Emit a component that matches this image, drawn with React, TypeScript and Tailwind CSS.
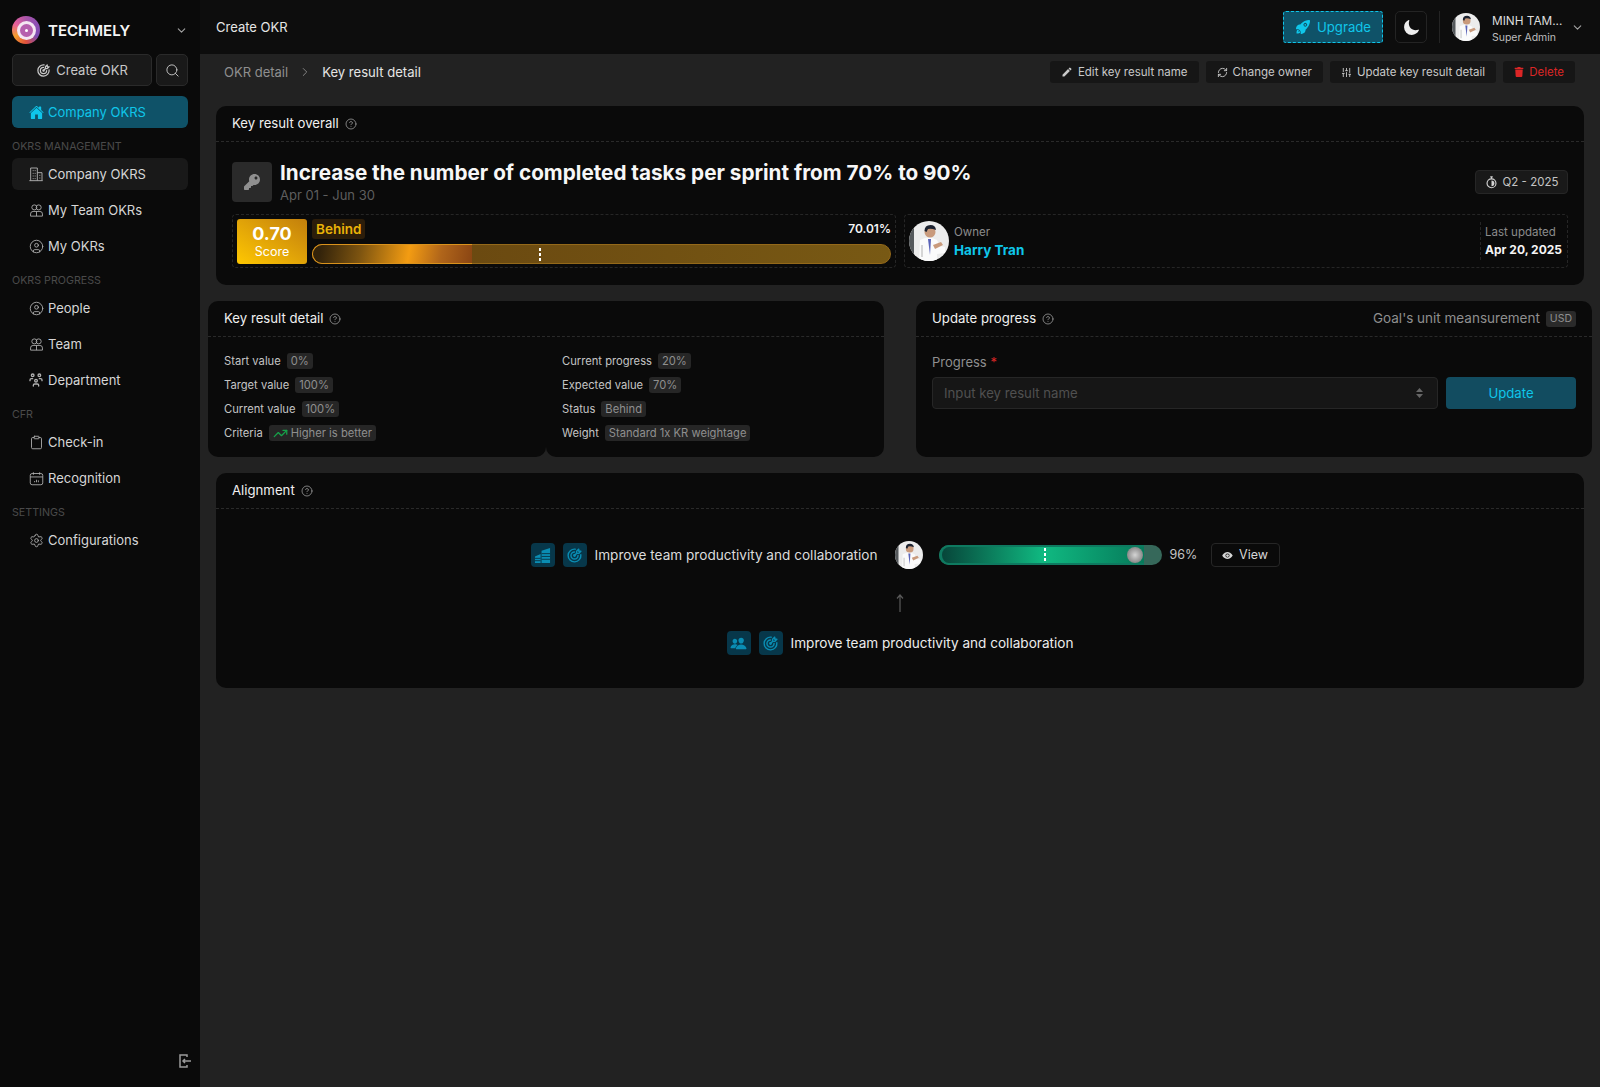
import {
  ChevronDown,
  ChevronRight,
  CircleHelp,
  CircleUser,
  Clipboard,
  RefreshCw,
  Search,
  Settings,
  SlidersVertical,
  TrendingUp,
} from "lucide-react";
import type { ReactNode } from "react";
import { FaKey, FaTrash } from "react-icons/fa";
import { IoEye, IoHome, IoMoon, IoPeople, IoRocket } from "react-icons/io5";
import { MdEdit } from "react-icons/md";
import { TbTargetArrow, TbUsersGroup } from "react-icons/tb";

function TeamIcon({ className }: { className?: string }) {
  return (
    <svg className={className} fill="none" stroke="currentColor" strokeWidth="1.4" viewBox="0 0 24 24">
      <circle cx="8.5" cy="7" r="4" />
      <circle cx="15.5" cy="7" r="4" />
      <path d="M2.5 21v-3.5a4 4 0 0 1 4-4h11a4 4 0 0 1 4 4V21z" strokeLinejoin="round" />
      <path d="M12 13.5V21" />
    </svg>
  );
}

function BuildingIcon({ className }: { className?: string }) {
  return (
    <svg className={className} fill="none" stroke="currentColor" strokeWidth="1.4" viewBox="0 0 24 24">
      <path d="M2 22h20M4 22V3h10v19M14 10h7v12" />
      <path d="M7 7h1.500M10 7h1.500M7 11h1.500M10 11h1.500M7 15h1.500M10 15h1.500M7 19h1.500M10 19h1.500M17 14h1.500M17 18h1.500" />
    </svg>
  );
}

function CalendarIcon({ className }: { className?: string }) {
  return (
    <svg className={className} fill="none" stroke="currentColor" strokeWidth="1.4" viewBox="0 0 24 24">
      <rect height="18" rx="3" width="20" x="2" y="4" />
      <path d="M2 9.500h20M7 2v4M17 2v4" />
      <path d="M9 18v-2M12 18v-4M15 18v-3" />
    </svg>
  );
}

function Avatar({ className }: { className?: string }) {
  return (
    <svg className={className} viewBox="0 0 40 40">
      <defs>
        <clipPath id="avatar-clip">
          <circle cx="20" cy="20" r="20" />
        </clipPath>
      </defs>
      <g clipPath="url(#avatar-clip)">
        <rect fill="#ececec" height="40" width="40" />
        <rect fill="#55595c" height="40" width="5" />
        <path d="M10 40 11 19q9-5 17 0l3 6 5 1v6l-8 1v7z" fill="#fbfbfb" />
        <path d="M19 18h3l-1 16z" fill="#5a63b8" />
        <circle cx="21" cy="11" fill="#c99a7c" r="5.500" />
        <path d="M15.500 10q0-6 6-6 5 0 5.500 5-5-2-8-1l-1.500 3z" fill="#1c2230" />
        <path d="M24 24l8-3 2 3-8 4z" fill="#c99a7c" />
        <path d="M12 24h2v12h-2z" fill="#d6d6d6" />
      </g>
    </svg>
  );
}

function HelpIcon() {
  return <CircleHelp className="size-[12px] text-[#a3a3a3]" strokeWidth={1.5} />;
}

function Card({ title, right, children }: { title: string; right?: ReactNode; children: ReactNode }) {
  return (
    <section className="rounded-[10px] bg-[#0a0a0a]">
      <CardHeader title={title} right={right} />
      {children}
    </section>
  );
}

function CardHeader({ title, right }: { title: string; right?: ReactNode }) {
  return (
    <div className="flex h-[36px] items-center gap-[6px] border-b border-dashed border-[#2a2a2a] px-4 text-[13.2px] text-[#f0f0f0]">
      <span>{title}</span>
      <HelpIcon />
      {right}
    </div>
  );
}

function NavItem({ icon, label, active }: { icon: ReactNode; label: string; active?: boolean }) {
  return (
    <div
      className={`flex h-[32px] items-center gap-[3px] rounded-md pl-[15px] text-[13px] text-[#d6d6d6] ${
        active ? "bg-[#191919]" : ""
      }`}
    >
      <span className="flex size-[18px] items-center justify-center text-[#b0b0b0]">{icon}</span>
      <span className="pt-px">{label}</span>
    </div>
  );
}

function NavLabel({ children }: { children: ReactNode }) {
  return <div className="flex h-[30px] pt-[10px] text-[10.7px] leading-[18px] text-[#4a4a4a]">{children}</div>;
}

function Sidebar() {
  const iconClass = "size-[15px]";
  return (
    <aside className="flex w-[200px] shrink-0 flex-col bg-[#0a0a0a] px-3 pt-4">
      <div className="flex h-[28px] items-center">
        <div className="flex size-[28px] items-center justify-center rounded-full bg-[conic-gradient(#a855a8,#8e4fb4,#7c4bb0,#e0503c,#f59e2e,#e8609c,#a855a8)]">
          <div className="flex size-[19px] items-center justify-center rounded-full bg-[#f4e6f2]">
            <div className="flex size-[13px] items-center justify-center rounded-full bg-[#b65fae]">
              <div className="size-[3px] rounded-full bg-white" />
            </div>
          </div>
        </div>
        <span className="ml-2 pt-[2px] text-[15px] font-semibold text-[#f5f5f5]">TECHMELY</span>
        <ChevronDown className="ml-auto size-[13px] text-[#a3a3a3]" />
      </div>

      <div className="mt-[10px] flex gap-1">
        <div className="flex h-[32px] w-[140px] items-center justify-center gap-[5px] rounded-[5px] border border-[#2a2a2a] bg-[#191919] text-[13px] text-[#c8c8c8]">
          <TbTargetArrow className="size-[15px]" />
          <span className="pt-px">Create OKR</span>
        </div>
        <div className="flex h-[32px] w-[32px] items-center justify-center rounded-[5px] border border-[#2a2a2a] bg-[#191919] text-[#c8c8c8]">
          <Search className="size-[15px]" strokeWidth={1.5} />
        </div>
      </div>

      <div className="mt-[10px] flex h-[32px] items-center gap-[3px] rounded-md bg-[#0f5268] pl-[15px] text-[13px] text-[#0fc6ea]">
        <span className="flex size-[18px] items-center justify-center">
          <IoHome className="size-[15px]" />
        </span>
        <span className="pt-px">Company OKRS</span>
      </div>

      <NavLabel>OKRS MANAGEMENT</NavLabel>
      <div className="flex flex-col gap-1">
        <NavItem active icon={<BuildingIcon className="size-[16px]" />} label="Company OKRS" />
        <NavItem icon={<TeamIcon className={iconClass} />} label="My Team OKRs" />
        <NavItem icon={<CircleUser className={iconClass} strokeWidth={1.4} />} label="My OKRs" />
      </div>

      <NavLabel>OKRS PROGRESS</NavLabel>
      <div className="flex flex-col gap-1">
        <NavItem icon={<CircleUser className={iconClass} strokeWidth={1.4} />} label="People" />
        <NavItem icon={<TeamIcon className={iconClass} />} label="Team" />
        <NavItem icon={<TbUsersGroup className="size-[16px]" />} label="Department" />
      </div>

      <NavLabel>CFR</NavLabel>
      <div className="flex flex-col gap-1">
        <NavItem icon={<Clipboard className={iconClass} strokeWidth={1.4} />} label="Check-in" />
        <NavItem icon={<CalendarIcon className="size-[15px]" />} label="Recognition" />
      </div>

      <NavLabel>SETTINGS</NavLabel>
      <NavItem icon={<Settings className={iconClass} strokeWidth={1.4} />} label="Configurations" />

      <div className="-mr-1 mb-[18px] mt-auto flex justify-end text-[#9a9a9a]">
        <svg className="size-[16px]" fill="none" stroke="currentColor" strokeWidth="1.500" viewBox="0 0 16 16">
          <path d="M11 4V2H4v12h7v-2" />
          <path d="M15 8H7M9 6 7 8l2 2" />
        </svg>
      </div>
    </aside>
  );
}

function TopBar() {
  return (
    <header className="flex h-[54px] items-center bg-[#0d0d0d] pl-4 pr-4">
      <span className="pt-px text-[13px] text-[#e5e5e5]">Create OKR</span>
      <div className="ml-auto flex h-[32px] w-[100px] items-center justify-center gap-[6px] rounded-[3px] border border-dashed border-[#0fc6ea] bg-[#0f5268] text-[13.2px] text-[#0fc6ea]">
        <IoRocket className="size-[16px]" />
        <span className="pt-px">Upgrade</span>
      </div>
      <div className="ml-3 flex h-[32px] w-[32px] items-center justify-center rounded-[5px] border border-[#242424] text-[#eeeeee]">
        <IoMoon className="size-[17px]" />
      </div>
      <div className="ml-3 h-[32px] w-px bg-[#242424]" />
      <Avatar className="ml-3 size-[28px]" />
      <div className="ml-3 w-[68px] whitespace-nowrap pt-[5px] leading-none">
        <div className="text-[11.8px] text-[#dddddd]">MINH TAM...</div>
        <div className="mt-[5px] text-[10.5px] text-[#bdbdbd]">Super Admin</div>
      </div>
      <ChevronDown className="ml-[11px] size-[13px] text-[#a3a3a3]" />
    </header>
  );
}

function ActionButton({ icon, label, danger }: { icon: ReactNode; label: string; danger?: boolean }) {
  return (
    <div
      className={`flex h-[22px] items-center gap-[5px] rounded-[3px] bg-[#161616] px-[11px] text-[11.5px] ${
        danger ? "text-[#dc2626]" : "text-[#c8c8c8]"
      }`}
    >
      {icon}
      <span className="pt-[2px]">{label}</span>
    </div>
  );
}

function Tag({ children }: { children: ReactNode }) {
  return (
    <span className="flex h-[16px] items-center gap-[3px] rounded-[3px] bg-[#262626] px-1 text-[11.2px] text-[#8f8f8f]">
      {children}
    </span>
  );
}

function DetailRow({ label, children }: { label: string; children: ReactNode }) {
  return (
    <div className="flex h-[24px] items-center gap-[6px] text-[11.2px] text-[#c4c4c4]">
      <span>{label}</span>
      <Tag>{children}</Tag>
    </div>
  );
}

function StopwatchIcon() {
  return (
    <svg className="size-[13px] text-[#d4d4d4]" fill="none" stroke="currentColor" strokeWidth="1.4" viewBox="0 0 16 16">
      <path d="M6.500 1h3M8 1v2.500" />
      <circle cx="8" cy="9" r="5.500" />
      <path d="M8 5.500a3.500 3.500 0 0 1 0 7z" fill="currentColor" stroke="none" />
    </svg>
  );
}

function ScoreRow() {
  return (
    <div className="mt-3 grid grid-cols-2 gap-2">
      <div className="flex h-[54px] gap-[5px] rounded-[4px] border border-dashed border-[#262626] px-1 pt-1">
        <div className="flex h-[45px] w-[70px] shrink-0 flex-col items-center justify-center rounded-[3px] bg-gradient-to-tr from-[#ffc800] to-[#c27f0c] text-white">
          <span className="text-[18px] font-bold leading-[20px]">0.70</span>
          <span className="text-[12.5px] leading-[15px]">Score</span>
        </div>
        <div className="flex-1">
          <div className="flex h-[20px] items-center justify-between">
            <span className="rounded-[3px] bg-[#2c1d0a] px-1 text-[13.5px] font-semibold leading-[20px] text-[#eab308]">
              Behind
            </span>
            <span className="text-[12px] font-semibold text-[#f5f5f5]">70.01%</span>
          </div>
          <div className="relative mt-[5px] h-[20px] rounded-full border border-[#94691a] bg-gradient-to-r from-[#66440f] to-[#785914]">
            <div className="absolute -inset-y-px -left-px w-[160px] rounded-l-full border-y-[1.5px] border-l-[1.5px] border-[#d9921c] bg-[linear-gradient(100deg,#33230a_5%,#7d5410_30%,#f39c12_60%,#b0651a_80%,#8a4513)]" />
            <div className="absolute left-[226px] top-[3px] h-[13px] w-[2px] bg-[repeating-linear-gradient(#ffffff_0_3px,transparent_3px_5px)]" />
          </div>
        </div>
      </div>
      <div className="flex h-[54px] items-center rounded-[4px] border border-dashed border-[#262626] pl-[4px] pr-[5px]">
        <Avatar className="size-[40px]" />
        <div className="ml-[5px]">
          <div className="text-[11.5px] leading-[17px] text-[#8c8c8c]">Owner</div>
          <div className="text-[13.5px] font-bold leading-[18px] text-[#0fc6ea]">Harry Tran</div>
        </div>
        <div className="ml-auto h-[38px] border-l border-dashed border-[#262626] pl-[4px]">
          <div className="pt-px text-[11.5px] leading-[18px] text-[#8c8c8c]">Last updated</div>
          <div className="text-[12px] font-bold leading-[18px] text-[#f5f5f5]">Apr 20, 2025</div>
        </div>
      </div>
    </div>
  );
}

function OverallCard() {
  return (
    <Card title="Key result overall">
      <div className="px-4 pb-[17px] pt-5">
        <div className="flex h-[40px] gap-2">
          <div className="flex size-[40px] items-center justify-center rounded-[4px] bg-[#2a2a2a] text-[#8f8f8f]">
            <FaKey className="size-[16px]" />
          </div>
          <div>
            <h1 className="text-[20.7px] font-bold leading-[21px] text-[#f7f7f7]">
              Increase the number of completed tasks per sprint from 70% to 90%
            </h1>
            <div className="text-[13px] leading-[24px] text-[#5e5e5e]">Apr 01 - Jun 30</div>
          </div>
          <div className="ml-auto mt-2 flex h-[24px] w-[93px] items-center justify-center gap-[5px] rounded-[4px] border border-[#262626] bg-[#191919] text-[11.5px] text-[#c4c4c4]">
            <StopwatchIcon />
            <span className="pt-px">Q2 - 2025</span>
          </div>
        </div>
        <ScoreRow />
      </div>
    </Card>
  );
}

function DetailCard() {
  return (
    <section>
      <div className="rounded-t-[10px] bg-[#0a0a0a]">
        <CardHeader title="Key result detail" />
      </div>
      <div className="grid h-[120px] grid-cols-2">
        <div className="rounded-b-[10px] bg-[#0a0a0a] pl-4 pt-[12px]">
          <DetailRow label="Start value">0%</DetailRow>
          <DetailRow label="Target value">100%</DetailRow>
          <DetailRow label="Current value">100%</DetailRow>
          <DetailRow label="Criteria">
            <TrendingUp className="size-[15px] text-[#16a34a]" strokeWidth={2} />
            Higher is better
          </DetailRow>
        </div>
        <div className="rounded-b-[10px] bg-[#0a0a0a] pl-4 pt-[12px]">
          <DetailRow label="Current progress">20%</DetailRow>
          <DetailRow label="Expected value">70%</DetailRow>
          <DetailRow label="Status">Behind</DetailRow>
          <DetailRow label="Weight">Standard 1x KR weightage</DetailRow>
        </div>
      </div>
    </section>
  );
}

function UpdateCard() {
  return (
    <Card
      title="Update progress"
      right={
        <div className="ml-auto flex items-center gap-[6px] text-[13.5px] text-[#8f8f8f]">
          Goal's unit meansurement
          <span className="flex h-[16px] items-center rounded-[3px] bg-[#2a2a2a] px-[4px] text-[10.5px]">USD</span>
        </div>
      }
    >
      <div className="h-[120px] px-4 pt-[15px]">
        <div className="text-[13px] leading-[20px] text-[#8f8f8f]">
          Progress <span className="text-[#dc2626]">*</span>
        </div>
        <div className="mt-[5px] flex gap-2">
          <div className="flex h-[32px] flex-1 items-center justify-between rounded-[4px] border border-[#262626] bg-[#161616] pl-[11px] pr-[14px] text-[13.2px] text-[#505050]">
            <span className="pt-px">Input key result name</span>
            <svg className="h-[10px] w-[7px] text-[#666666]" fill="currentColor" viewBox="0 0 7 10">
              <path d="M3.500 0 7 4H0zM3.500 10 0 6h7z" />
            </svg>
          </div>
          <div className="flex h-[32px] w-[130px] items-center justify-center rounded-[4px] bg-[#124c60] pt-px text-[13.2px] text-[#0fc6ea]">
            Update
          </div>
        </div>
      </div>
    </Card>
  );
}

function IconTile({ children }: { children: ReactNode }) {
  return (
    <div className="flex size-[24px] items-center justify-center rounded-[4px] bg-[#07374a] text-[#0a8db3]">
      {children}
    </div>
  );
}

function AlignmentCard() {
  return (
    <Card title="Alignment">
      <div className="flex h-[179px] flex-col items-center pt-[32px] text-[13.6px]">
        <div className="ml-[10px] flex h-[28px] items-center">
          <IconTile>
            <svg className="size-[17px]" viewBox="0 0 18 18">
              <path d="M1 17v-7l6-2.500V17zM8 17V4l9-3v16z" fill="currentColor" />
              <path d="M1 12h6M1 14.500h6M8 7h9M8 10h9M8 13h9" stroke="#07374a" strokeWidth="1" />
            </svg>
          </IconTile>
          <div className="ml-2">
            <IconTile>
              <TbTargetArrow className="size-[17px]" />
            </IconTile>
          </div>
          <span className="ml-2 w-[284px] whitespace-nowrap text-[#dcdcdc]">
            Improve team productivity and collaboration
          </span>
          <Avatar className="ml-4 size-[28px]" />
          <div className="relative ml-4 h-[20px] w-[223px] rounded-full bg-[#36685a]">
            <div className="absolute inset-y-0 left-0 w-[205px] rounded-l-full border-y-[2px] border-l-[3px] border-[#0e7a60] bg-[linear-gradient(90deg,#07463a,#10b981_50%,#067a5a)]" />
            <div className="absolute left-[105px] top-[3px] h-[14px] w-[2px] bg-[repeating-linear-gradient(#ffffff_0_3px,transparent_3px_5px)]" />
            <div className="absolute left-[188px] top-[2px] size-[16px] rounded-full bg-[radial-gradient(circle,#d4d4d4,#8a8a8a_70%,#c4c4c4)]" />
          </div>
          <span className="ml-2 w-[41px] text-[12.5px] text-[#c4c4c4]">96%</span>
          <div className="flex h-[24px] w-[69px] items-center justify-center gap-[6px] rounded-[4px] border border-[#262626] text-[12.5px] text-[#d6d6d6]">
            <IoEye className="size-[11px]" />
            View
          </div>
        </div>
        <svg
          className="mt-[25px] h-[18px] w-[12px] text-[#5a5a5a]"
          fill="none"
          stroke="currentColor"
          strokeWidth="1.2"
          viewBox="0 0 12 18"
        >
          <path d="M6 18V1M3 4.500 6 1l3 3.500" />
        </svg>
        <div className="mt-[19px] flex h-[24px] items-center">
          <IconTile>
            <IoPeople className="size-[17px]" />
          </IconTile>
          <div className="ml-2">
            <IconTile>
              <TbTargetArrow className="size-[17px]" />
            </IconTile>
          </div>
          <span className="ml-2 text-[#ededed]">Improve team productivity and collaboration</span>
        </div>
      </div>
    </Card>
  );
}

export default function App() {
  return (
    <div className="flex min-h-[1087px] w-full bg-[#222222] font-['Inter',sans-serif]">
      <Sidebar />
      <main className="min-w-0 flex-1">
        <TopBar />
        <div className="flex h-[36px] items-center pl-6 pr-[25px]">
          <span className="pt-px text-[13px] text-[#8f8f8f]">OKR detail</span>
          <ChevronRight className="mx-[10px] size-[14px] text-[#8f8f8f]" strokeWidth={1.5} />
          <span className="pt-px text-[13.1px] text-[#e5e5e5]">Key result detail</span>
          <div className="ml-auto flex gap-[7px]">
            <ActionButton icon={<MdEdit className="size-[12px]" />} label="Edit key result name" />
            <ActionButton icon={<RefreshCw className="size-[11px]" />} label="Change owner" />
            <ActionButton icon={<SlidersVertical className="size-[11px]" />} label="Update key result detail" />
            <ActionButton danger icon={<FaTrash className="size-[10px]" />} label="Delete" />
          </div>
        </div>
        <div className="flex flex-col gap-4 px-4 pt-4">
          <OverallCard />
          <div className="-mx-2 grid grid-cols-2 gap-8">
            <DetailCard />
            <UpdateCard />
          </div>
          <AlignmentCard />
        </div>
      </main>
    </div>
  );
}
